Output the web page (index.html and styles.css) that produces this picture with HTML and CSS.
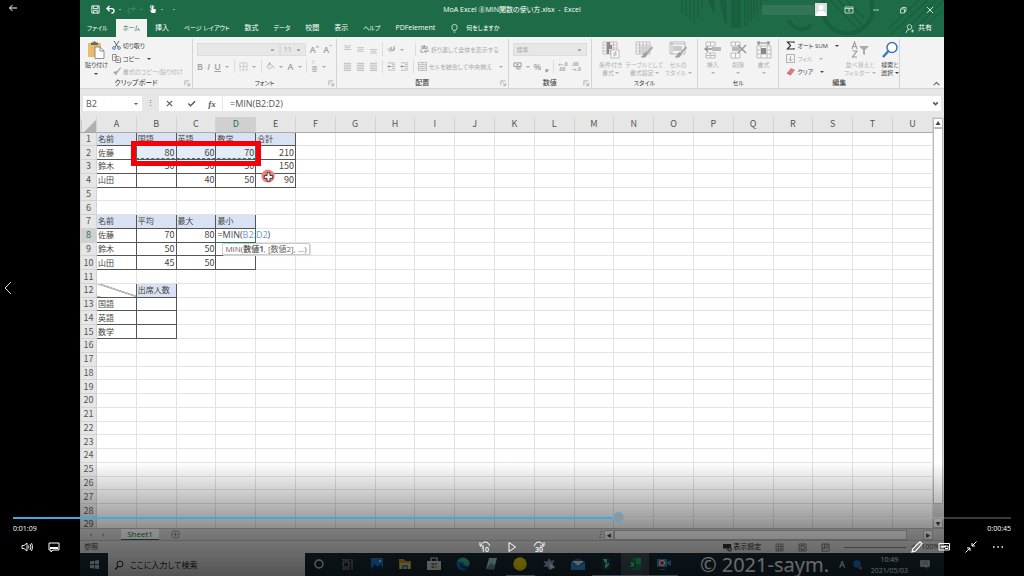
FILE: index.html
```html
<!DOCTYPE html>
<html lang="ja">
<head>
<meta charset="utf-8">
<title>MoA Excel ⑧MIN関数の使い方.xlsx - Excel</title>
<link rel="stylesheet" href="styles.css">
</head>
<body>
<svg class="defs" aria-hidden="true">
  <symbol id="launch" viewBox="0 0 8 8"><path d="M1 6V1h5M3 3l3 3M6.500 3.500v3h-3" fill="none" stroke="currentColor" stroke-width=".8"/></symbol>
  <symbol id="lines" viewBox="0 0 10 10"><path d="M1 1.500h8M1 3.500h8M1 5.500h8M1 7.500h8M1 9.500h8" stroke="currentColor" stroke-width=".8"/></symbol>
  <symbol id="indent" viewBox="0 0 10 10"><path d="M1 1h8M5.500 3h3.500M5.500 5h3.500M5.500 7h3.500M1 9h8" stroke="currentColor" stroke-width=".8"/><path d="M1 5h4M2.500 3.500L1 5l1.500 1.500" fill="none" stroke="#7894ae"/></symbol>
  <symbol id="table" viewBox="0 0 18 18"><path d="M1 1h14v12H1zM1 4h14M1 7h14M1 10h14M4.500 1v12M8 1v12M11.500 1v12" fill="#f8f6f8" stroke="#bbb5ba" stroke-width=".8"/></symbol>
  <symbol id="brush" viewBox="0 0 18 18"><path d="M17 5l-6 6.500 1.500 1.500L18 7z" fill="#aaa6aa"/><path d="M11 11c-3 0-2 4-5.500 5 3 1.500 6.500.5 7-3z" fill="#9ca2aa"/></symbol>
</svg>

<main class="player">
  <section class="video" aria-label="Excel">
    <header class="titlebar">
      <svg class="art" viewBox="0 0 270 37" preserveAspectRatio="xMaxYMin slice" aria-hidden="true">
        <g stroke="#1a5f3f" stroke-width="1.500" fill="none"><path d="M8 0v13M12 0v16M16 0v20M20 0v24M24 0v18M28 0v8M71 0v26M74 0v24M77 0v21M80 0v18M83 0v14M87 0v9"/><path d="M35 0h5v13zM46 0h6v24zM58 0h8v27h-8z" fill="#1a5f3f"/></g>
        <g fill="none" stroke="#1a5f3f" stroke-width="4"><path d="M115 20a13 13 0 0 0 22 5"/><path d="M150 0a25 25 0 1 0 47 0"/></g>
        <path d="M156 0l30 31M164 0l24 25M172 0l18 18M245 0l-30 28M254 0l-38 35M262 0l-34 33M270 0l-28 28M269 10l-22 20" stroke="#1a5f3f" stroke-width="1.500"/>
      </svg>
      <div class="title-row">
        <div class="quick">
          <button aria-label="上書き保存"><svg viewBox="0 0 10 10"><path d="M1 1h8v8H1zM3 9V6h4v3M2.500 1v3h5V1" fill="none" stroke="#fff"/></svg></button>
          <button aria-label="元に戻す"><svg viewBox="0 0 10 10"><path d="M4 1L1 4l3 3M1 4h5q3 0 3 2.500T6 9" fill="none" stroke="#fff" stroke-width="1.400"/></svg></button>
          <span class="caret"></span>
          <button class="faded" aria-label="やり直し"><svg viewBox="0 0 10 10"><path d="M6 1l3 3-3 3M9 4H4Q1 4 1 6.500T4 9" fill="none" stroke="#78a98d"/></svg></button>
          <span class="caret faded"></span>
          <button aria-label="タッチ"><svg viewBox="0 0 10 10"><path d="M4 1v5L2 5l2 4h4l1-4-3.500-1V1z" fill="#fff"/><circle cx="4.500" cy="2" r="2" fill="none" stroke="#fff" stroke-width=".7"/></svg></button>
          <span class="caret"></span>
          <span class="caret far"></span>
        </div>
        <h1>MoA Excel ⑧MIN関数の使い方.xlsx&nbsp; -&nbsp; Excel</h1>
        <div class="window">
          <span class="account"></span>
          <svg class="avatar" viewBox="0 0 12 13"><path fill="#ddd" d="M0 0h12v13H0z"/><circle cx="6" cy="4.500" r="2.600" fill="#fff"/><path d="M1 13q0-5 5-5t5 5z" fill="#fff"/></svg>
          <button aria-label="リボンの表示オプション"><svg viewBox="0 0 10 10"><path d="M1 2h8v6H1zM1 3.500h8M5 7V4.500M4 5.500l1-1 1 1" fill="none" stroke="#e0eee5" stroke-width=".8"/></svg></button>
          <button aria-label="最小化"><svg viewBox="0 0 10 10"><path d="M2 5h6" stroke="#e0eee5" stroke-width=".8"/></svg></button>
          <button aria-label="元に戻す(縮小)"><svg viewBox="0 0 10 10"><path d="M2.500 4h4v4h-4zM4 4V2.500h4v4H6.500" fill="none" stroke="#e0eee5" stroke-width=".8"/></svg></button>
          <button aria-label="閉じる"><svg viewBox="0 0 10 10"><path d="M2 2l6 6M8 2L2 8" stroke="#e0eee5" stroke-width=".9"/></svg></button>
        </div>
      </div>
      <nav class="tabs">
        <button class="kana">ファイル</button><button class="kana active">ホーム</button><button>挿入</button><button class="kana">ページ レイアウト</button><button>数式</button><button class="kana">データ</button><button>校閲</button><button>表示</button><button class="kana">ヘルプ</button><button>PDFelement</button>
        <button class="kana tell"><svg viewBox="0 0 8 10"><path d="M2.500 7Q1 5 1 3.500a3 3 0 0 1 6 0Q7 5 5.500 7zM3 9h2" fill="none" stroke="#fff" stroke-width=".8"/></svg>何をしますか</button>
        <button class="share"><svg viewBox="0 0 9 9"><circle cx="4.500" cy="3" r="2.300" fill="none" stroke="#dcece2" stroke-width=".8"/><path d="M1 9q0-3.500 3.500-3.500M6 7h3M7.500 5.500v3" fill="none" stroke="#dcece2" stroke-width=".8"/></svg>共有</button>
      </nav>
    </header>

    <div class="ribbon">
      <section class="group g-clip">
        <div class="body">
          <button class="big"><svg viewBox="0 0 18 18"><path d="M1 2h13v14H1z" fill="#eabb6b"/><path d="M4 3V1.500h2Q7.500-1 9 1.500h2V4H4z" fill="#686868"/><path d="M8 6h5l4 4v7.500H8z" fill="#fff" stroke="#777" stroke-width=".8"/><path d="M13 6v4h4" fill="none" stroke="#777" stroke-width=".8"/></svg><span>貼り付け</span><i class="caret"></i></button>
          <div class="stack">
            <button><svg viewBox="0 0 9 9"><path d="M2 0l4 6M7 0L3 6" stroke="#555" stroke-width=".9"/><circle cx="2" cy="7" r="1.400" fill="none" stroke="#4a7fc0"/><circle cx="7" cy="7" r="1.400" fill="none" stroke="#4a7fc0"/></svg>切り取り</button>
            <button><svg viewBox="0 0 9 9"><path d="M.5.5h3.500v6H.5zM4 2.500h3l1.500 1.500v4.500H4zM5 5h2.500M5 6.500h2.500M1.500 3H3" fill="#fff" stroke="#666" stroke-width=".7"/></svg>コピー<i class="caret"></i></button>
            <button class="dim"><svg viewBox="0 0 9 9"><path d="M8.500 0L5 4l1 1 3-4zM5 4L1 5l3 3.500L6 5z" fill="#aaa"/></svg>書式のコピー/貼り付け</button>
          </div>
        </div>
        <footer>クリップボード<svg><use href="#launch"/></svg></footer>
      </section>
      <section class="group g-font">
        <div class="body rows">
          <div class="row"><select class="family" aria-label="フォント" disabled><option></option></select><select class="size" aria-label="サイズ" disabled><option>11</option></select><b class="glyph">A<sup>^</sup></b><b class="glyph">A<sup>ˇ</sup></b></div>
          <div class="row spread"><b class="glyph">B</b><b class="glyph"><i>I</i></b><b class="glyph"><u>U</u></b><i class="caret"></i><hr><svg viewBox="0 0 10 10"><path d="M1 1h8v8H1zM5 1v8M1 5h8" fill="none" stroke="#bbb" stroke-dasharray="1 .5"/></svg><i class="caret"></i><hr><svg viewBox="0 0 10 10"><path d="M4 1L1 5l3 3 3.500-3.500zM4 0v4M8 5l1 2" fill="#eee" stroke="#aaa" stroke-width=".9"/></svg><i class="caret"></i><b class="glyph">A</b><i class="caret"></i><hr><span class="ruby"><small>ア</small><span>亜</span></span><i class="caret"></i></div>
        </div>
        <footer class="kana">フォント<svg><use href="#launch"/></svg></footer>
      </section>
      <section class="group g-align">
        <div class="body rows">
          <div class="row"><svg viewBox="0 0 10 10"><path d="M1 1h8M2 3h6M1 5h8" stroke="#aaa" stroke-width=".7"/></svg><svg viewBox="0 0 10 10"><path d="M1 3h8M2 5h6M1 7h8" stroke="#aaa" stroke-width=".7"/></svg><svg viewBox="0 0 10 10"><path d="M1 5h8M2 7h6M1 9h8" stroke="#aaa" stroke-width=".7"/></svg><hr><svg viewBox="0 0 10 10"><path d="M1 4l3 4M3 3l3 4M5 2l-1 3 3 1 1-3M8 1v5" fill="none" stroke="#999"/></svg><i class="caret"></i><span class="gap"></span><hr><span class="wide"><svg viewBox="0 0 10 10"><path d="M2 1v3h2V1zM5 0v4h3V2H5M1 5v3h3M9 5v2H5M6.500 5.500L5 7l1.500 2" fill="none" stroke="#999"/></svg>折り返して全体を表示する</span></div>
          <div class="row"><svg><use href="#lines"/></svg><svg><use href="#lines"/></svg><svg><use href="#lines"/></svg><hr><svg><use href="#indent"/></svg><svg><use href="#indent"/></svg><hr><span class="wide"><svg viewBox="0 0 10 10"><path d="M.5.5h9v9h-9zM.5 3h9M.5 7h9M5 .5V3M5 7v2.500M2 5h6" fill="none" stroke="#aaa" stroke-width=".8"/></svg>セルを結合して中央揃え<i class="caret"></i></span></div>
        </div>
        <footer>配置<svg><use href="#launch"/></svg></footer>
      </section>
      <section class="group g-num">
        <div class="body rows">
          <div class="row"><select class="format" aria-label="数値の書式" disabled><option>標準</option></select></div>
          <div class="row spread"><svg viewBox="0 0 10 10"><path d="M1 1h8v4H1z" fill="none" stroke="#8a94a4"/><ellipse cx="6" cy="7" rx="3" ry="2" fill="#ccc0bb"/><circle cx="5" cy="3" r="1" fill="#888"/></svg><i class="caret"></i><b class="glyph">%</b><b class="glyph">❟</b><hr><span class="dec">←.0<br>.00</span><span class="dec">.00<br>→.0</span></div>
        </div>
        <footer>数値<svg><use href="#launch"/></svg></footer>
      </section>
      <section class="group g-style">
        <div class="body bigs dim">
          <button class="big"><svg viewBox="0 0 18 18"><use href="#table"/><path d="M5 1h3v3h2v4H7v5H5z" fill="#8f8b90"/><path d="M9 9h8v8H9zM11 12h4M11 14h4M14 10l-2 6" fill="#fff" stroke="#aaa" stroke-width=".8"/></svg><span>条件付き<br>書式 <i class="caret"></i></span></button>
          <button class="big"><svg viewBox="0 0 18 18"><use href="#table"/><path d="M5 5h10v8H5z" fill="#ccc8cf" opacity=".6"/><use href="#brush"/></svg><span>テーブルとして<br>書式設定 <i class="caret"></i></span></button>
          <button class="big"><svg viewBox="0 0 18 18"><path d="M1 1h15v12H1zM1 3h15M3 1v12" fill="#f8f6f8" stroke="#bbb"/><path d="M4 5h9v5H4z" fill="#ccc8cf"/><use href="#brush"/></svg><span>セルの<br>スタイル <i class="caret"></i></span></button>
        </div>
        <footer class="kana">スタイル</footer>
      </section>
      <section class="group g-cell">
        <div class="body bigs dim">
          <button class="big"><svg viewBox="0 0 18 18"><path d="M2 1h9v4H2zM2 12h9v5H2zM6.500 1v4M6.500 12v5M2 14.500h9" fill="#f8f8f8" stroke="#bbb"/><path d="M8 6h9v4H8z" fill="#bbb8c0"/><path d="M8 8H1M4 5.500L1 8l3 2.500" fill="none" stroke="#8c939f" stroke-width="1.300"/></svg><span>挿入<br><i class="caret"></i></span></button>
          <button class="big"><svg viewBox="0 0 18 18"><path d="M2 1h9v4H2zM2 12h9v5H2zM6.500 1v4M6.500 12v5" fill="#f8f8f8" stroke="#bbb"/><path d="M3 6h8v4H3z" fill="#bbb8c0"/><path d="M9 4l8 8M17 4l-8 8" stroke="#999" stroke-width="1.500"/></svg><span>削除<br><i class="caret"></i></span></button>
          <button class="big"><svg viewBox="0 0 18 18"><path d="M2 5h14v12H2zM2 9h14M2 13h14M6 5v12M12 5v12" fill="#f8f8f8" stroke="#bbb"/><path d="M6 7h5v6H6z" fill="#88858c"/><path d="M3 0v4M14 0v4M3 2h11M5 .5L3 2l2 1.500M12 .5L14 2l-2 1.500" fill="none" stroke="#888"/></svg><span>書式<br><i class="caret"></i></span></button>
        </div>
        <footer class="kana">セル</footer>
      </section>
      <section class="group g-edit">
        <div class="body">
          <div class="stack">
            <button><svg viewBox="0 0 9 9"><path d="M8 2V1H1.500l3 3.500-3 3.500H8V7" fill="none" stroke="#333" stroke-width="1.200"/></svg>オート SUM<i class="caret"></i></button>
            <button class="dim"><svg viewBox="0 0 9 9"><path d="M.5.5h8v8h-8zM4.500 2v5M2.500 5l2 2 2-2" fill="none" stroke="#aaa" stroke-width=".9"/></svg>フィル<i class="caret"></i></button>
            <button><svg viewBox="0 0 9 9"><path d="M5 1l4 2-4 5-4-2z" fill="#e07882"/><path d="M1 6l4 2" stroke="#b7535e"/></svg>クリア<i class="caret"></i></button>
          </div>
          <button class="big dim"><svg viewBox="0 0 18 18"><path d="M1 8l2.500-7L6 8M2 5.500h3M1.500 10H6l-4.500 6H6" fill="none" stroke="#999" stroke-width="1.100"/><path d="M8 5h10l-4 4v5l-2-1V9z" fill="#aaa"/></svg><span>並べ替えと<br>フィルター <i class="caret"></i></span></button>
          <button class="big"><svg viewBox="0 0 18 18"><circle cx="11" cy="6.500" r="5" fill="#fff" stroke="#3b78b5" stroke-width="1.500"/><path d="M7.500 10L2 16" stroke="#3b78b5" stroke-width="2.500"/></svg><span>検索と<br>選択 <i class="caret"></i></span></button>
        </div>
        <footer>編集</footer>
      </section>
      <section class="g-end"><svg viewBox="0 0 8 8"><path d="M1.500 5.500L4 3l2.500 2.500" fill="none" stroke="#555" stroke-width=".9"/></svg></section>
    </div>

    <div class="formula">
      <div class="namebox"><input aria-label="名前ボックス" value="B2"><i class="caret"></i></div>
      <span class="grip">⋮</span>
      <div class="fx"><button aria-label="キャンセル"><svg viewBox="0 0 10 10"><path d="M2 2l6 6M8 2L2 8" stroke="#555" stroke-width="1.200"/></svg></button><button aria-label="入力"><svg viewBox="0 0 10 10"><path d="M1.500 5L4 7.500 9 2.500" fill="none" stroke="#555" stroke-width="1.500"/></svg></button><button aria-label="関数の挿入"><i>fx</i></button></div>
      <div class="entry"><input aria-label="数式バー" value="=MIN(B2:D2)"><svg viewBox="0 0 8 8"><path d="M2 3l2 2 2-2" fill="none" stroke="#555" stroke-width="1.300"/></svg></div>
    </div>

    <div class="work">
      <div class="sheet">
        <table id="grid"></table>
        <div class="marquee"></div>
        <div class="redbox"></div>
        <svg class="pointer" viewBox="0 0 16 16"><circle cx="7.500" cy="7.500" r="7" fill="#ee7f78"/><path d="M6.500 4h3v3h3v3h-3v3h-3v-3h-3V7h3z" fill="#fff" stroke="#222" stroke-width=".9"/></svg>
      </div>
      <div class="vscroll"><span>▲</span><i></i><span>▼</span></div>
    </div>

    <div class="sheetbar">
      <span class="nav">‹</span><span class="nav">›</span><button class="tab">Sheet1</button>
      <svg class="add" viewBox="0 0 10 10"><circle cx="5" cy="5" r="4.300" fill="none" stroke="#777" stroke-width=".8"/><path d="M5 2.500v5M2.500 5h5" stroke="#777" stroke-width=".8"/></svg>
      <div class="hscroll"><em>⋮</em><span>◀</span><i></i><span class="end">▶</span></div>
    </div>
    <div class="status"><span>参照</span>
      <div class="views"><span class="disp"><svg viewBox="0 0 10 10"><path d="M0 1h9v5H0zM3 8h4V6" fill="#333"/><circle cx="7.500" cy="7" r="2" fill="#aaa" stroke="#333"/></svg>表示設定</span>
      <svg viewBox="0 0 9 9"><path d="M1 1h7v7H1zM1 3.500h7M1 6h7M3.500 1v7M6 1v7" fill="none" stroke="#777" stroke-width=".8"/></svg>
      <svg viewBox="0 0 9 9"><path d="M1 1h7v7H1zM3 2.500h3v4H3z" fill="none" stroke="#777"/></svg>
      <svg viewBox="0 0 9 9"><path d="M1 1h7v7H1zM3.500 1v4H6V1M1 5h3" fill="none" stroke="#777"/></svg>
      <span class="zoom"></span><span>＋</span><span>100%</span></div>
    </div>
    <div class="taskbar">
      <button class="start" aria-label="スタート"><svg viewBox="0 0 10 10"><path d="M0 1.500l4.500-.7v4H0zM5.200.7L10 0v4.800H5.200zM0 5.500h4.500v4L0 8.800zM5.200 5.500H10V10l-4.800-.6z" fill="#b8c4cc"/></svg></button>
      <label class="search"><svg viewBox="0 0 10 10"><circle cx="6" cy="4" r="3" fill="none" stroke="#222"/><path d="M4 6.500L1 9.500" stroke="#222" stroke-width="1.200"/></svg><input aria-label="検索" placeholder="ここに入力して検索"></label>
      <div class="apps">
        <span><svg viewBox="0 0 14 14"><circle cx="7" cy="7" r="4" fill="none" stroke="#ddd" stroke-width="1.500"/></svg></span>
        <span><svg viewBox="0 0 14 14"><path d="M2 5h6v5H2zM2 2v1h6V2M2 13v-1h6v1M11 2v4M11 8v5M10 6.500h2" fill="none" stroke="#99a"/></svg></span>
        <span><svg viewBox="0 0 14 14"><path d="M1 1h12v12H1z" fill="#1d7fd4"/><path d="M1 12l4-5 3 3 2-3 3 4v2H1z" fill="#083057"/><circle cx="10" cy="4" r="1" fill="#fff"/></svg></span>
        <span><svg viewBox="0 0 14 14"><path d="M1 2h5l1 2h6v8H1z" fill="#d99a25"/><path d="M2 6h10v6H2z" fill="#f5cf67"/><path d="M4 8h6v4H8v-2H6v2H4z" fill="#3a8bc9"/></svg></span>
        <span><svg viewBox="0 0 14 14"><path d="M0 4h14v9H0z" fill="#ddd"/><path d="M4 4V1h6v3" fill="none" stroke="#ddd" stroke-width="1.200"/><path d="M4.500 6H7v2H4.500z" fill="#e44"/><path d="M7.500 6H10v2H7.500z" fill="#4a4"/><path d="M4.500 9H7v2H4.500z" fill="#28c"/><path d="M7.500 9H10v2H7.500z" fill="#da3"/></svg></span>
        <span><svg viewBox="0 0 14 14"><circle cx="7" cy="7" r="6.500" fill="#1573bd"/><path d="M1 5q3-5 8-4 5 2 4.500 6.500-3 2-5.500 0Q8 3 1 5z" fill="#3fbf9a"/><path d="M5 7q0 4 7 4" fill="none" stroke="#06324f" stroke-width="2"/></svg></span>
        <span><svg viewBox="0 0 14 14"><path d="M5 1h8l-3 11H2z" fill="#a8d8dc"/><path d="M2 12l5-6 4 3-1 4z" fill="#5d8d9c"/></svg></span>
        <span class="on"><svg viewBox="0 0 14 14"><circle cx="7" cy="7" r="6.700" fill="#eedc00"/></svg></span>
        <span><svg viewBox="0 0 14 14"><path d="M7 1l1.500 3 4-1-2 4 2.500 3-4-.5L7 13l-1.500-3.500-4 .5 2-3-2-3 4 .5z" fill="#99a4d5"/><path d="M8 6l5 5-3 .5L8 13z" fill="#eee"/></svg></span>
        <span><svg viewBox="0 0 14 14"><path d="M0 5l7-4 7 4v8H0z" fill="#1767a5"/><path d="M1 4h12L7 9z" fill="#eee"/><path d="M0 5l7 5 7-5v8H0z" fill="#2d9ce0"/></svg></span>
        <span class="on"><svg viewBox="0 0 14 14"><path d="M2 1h10v12H2z" fill="#153d3a"/><path d="M4 2h4v4H6zM6 7l4-1v2l-4 4z" fill="#6de0c0"/></svg></span>
        <span class="on current"><svg viewBox="0 0 14 14"><path d="M4 1h9v12H4z" fill="#1a8a50"/><path d="M8 1h5v6H8z" fill="#35b475"/><path d="M1 4h7v7H1z" fill="#107040"/><path d="M3 5.500l3 4M6 5.500l-3 4" stroke="#fff"/></svg></span>
        <span class="on"><svg viewBox="0 0 14 14"><path d="M0 2h10v8H0zM10 5l4-2v6l-4-2zM3 12h5v1H3z" fill="#3a93bb"/><circle cx="5" cy="6" r="3" fill="#fff"/><circle cx="5" cy="6" r="2" fill="#e03030"/></svg></span>
      </div>
      <div class="tray"><span class="ime">A</span><svg viewBox="0 0 10 10"><circle cx="4" cy="4" r="3.800" fill="#1673cc"/><circle cx="7.500" cy="8" r="1.500" fill="#e35c3c"/></svg><time>10:49<br>2021/05/03</time><svg viewBox="0 0 10 10"><path d="M0 0h10v7H7v2L5 7H0zM2 2h6M2 4h6" fill="#ccc" stroke="#555" stroke-width=".6"/></svg></div>
      <strong class="mark">© 2021-saym.</strong>
    </div>
  </section>

  <button class="back" aria-label="戻る"><svg viewBox="0 0 10 10"><path d="M1.500 5H9M4.500 2l-3 3 3 3" fill="none" stroke="#fff"/></svg></button>
  <button class="prev" aria-label="前へ"><svg viewBox="0 0 10 14"><path d="M8 1L2 7l6 6" fill="none" stroke="#ddd"/></svg></button>

  <div class="controls">
    <input class="seek" type="range" aria-label="シーク" min="0" max="1000" value="608">
    <div class="times"><span>0:01:09</span><span>0:00:45</span></div>
    <div class="buttons">
      <div><button aria-label="音量"><svg viewBox="0 0 12 12"><path d="M1 4.500h2L6 2v8L3 7.500H1zM7.500 4.500q1 1.500 0 3M9 3q2 3 0 6M10.500 2q2.500 4 0 8" fill="none" stroke="#fff" stroke-width=".9"/></svg></button><button aria-label="字幕"><svg viewBox="0 0 12 12"><path d="M1 2h10v7H5l-2 2V9H1z" fill="none" stroke="#fff"/><path d="M2 6h8v2H2z" fill="#fff"/></svg></button></div>
      <div><button class="skip" aria-label="10秒戻す"><svg viewBox="0 0 12 6"><path d="M1 1v4h4M1.500 4.500Q5-1 9 2l2 3" fill="none" stroke="#fff"/></svg>10</button><button aria-label="再生"><svg viewBox="0 0 12 12"><path d="M3 1.500L9.500 6 3 10.500z" fill="none" stroke="#fff"/></svg></button><button class="skip" aria-label="30秒進む"><svg viewBox="0 0 12 6"><path d="M11 1v4H7M10.500 4.500Q7-1 3 2L1 5" fill="none" stroke="#fff"/></svg>30</button></div>
      <div><button aria-label="編集"><svg viewBox="0 0 12 12"><path d="M1 11l1-3.500L9 .8l2 2L4.500 10z" fill="none" stroke="#fff" stroke-width="1.200"/></svg></button><button aria-label="小さく表示"><svg viewBox="0 0 12 12"><path d="M1 2.500h10.500v6.500H1zM6 5h4v2.500H7" fill="none" stroke="#fff"/><path d="M3 5h5v1.500H3z" fill="#fff"/></svg></button><button aria-label="全画面表示の終了"><svg viewBox="0 0 12 12"><path d="M11.500.5L7 5M7 2v3h3M.5 11.500L5 7M2 7h3v3" fill="none" stroke="#fff"/></svg></button><button aria-label="その他"><svg viewBox="0 0 12 12"><path d="M1 6h1.500M5.300 6h1.500M9.500 6H11" stroke="#fff" stroke-width="1.300"/></svg></button></div>
    </div>
  </div>
</main>
<script src="script.js"></script>
</body>
</html>
```

FILE: styles.css
```css
* { box-sizing: border-box; }
body { margin: 0; background: #000; font-family: "Open Sans", "Noto Sans CJK JP", sans-serif; font-size: 7px; line-height: 8px; color: #444; }
button, input, select { font: inherit; color: inherit; border: 0; background: none; padding: 0; margin: 0; min-width: 0; }
button { display: flex; align-items: center; justify-content: center; white-space: nowrap; }
svg { flex: none; width: 9px; height: 9px; }
hr { width: 1px; height: 13px; margin: 0; border: 0; background: #dcdcdc; }
.defs { position: absolute; width: 0; height: 0; }
.player { position: relative; min-height: 100vh; display: flex; overflow: hidden; }
.video { flex: 1; min-width: 0; height: 100vh; margin: 0 80px; display: flex; flex-direction: column; background: #e6e6e6; font-feature-settings: "palt"; }
.caret { flex: none; display: inline-block; border: 1px solid transparent; border-width: 2px 2px 0; border-top-color: currentColor; }

.titlebar { position: relative; background: #1d6c47; color: #fff; height: 37px; display: flex; flex-direction: column; flex: none; }
.art { position: absolute; right: 0; top: 0; width: 270px; height: 37px; }
.title-row { position: relative; display: grid; grid-template-columns: 1fr auto 1fr; align-items: center; height: 19px; }
.title-row h1 { margin: 0; font-size: 7px; font-weight: 400; }
.quick { display: flex; align-items: center; gap: 6px; padding-left: 11px; }
.quick .caret { margin-left: -2px; border-width: 1px 1px 0; }
.quick .far { margin-left: 4px; }
.faded { opacity: .5; }
.window { display: flex; justify-content: flex-end; align-items: center; gap: 17px; padding-right: 9px; }
.window button svg { width: 10px; height: 10px; }
.account { width: 52px; height: 10px; margin-right: -17px; background: #437b60; opacity: .6; }
.avatar { width: 12px; height: 13px; margin-left: 1px; }
.tabs { position: relative; display: flex; height: 18px; gap: 1px; }
.tabs button { padding: 0 7px; }
.kana, .tabs .kana { font-size: 6px; }
.tabs .active { background: #f3f3f3; color: #1d6c47; }
.tabs .tell { gap: 7px; }
.tabs .share { margin-left: auto; gap: 4px; padding-right: 12px; }

.ribbon { display: flex; height: 52px; flex: none; background: #f3f3f3; border-bottom: 1px solid #d5d5d5; padding-top: 2px; }
.group { display: flex; flex-direction: column; min-width: 0; border-right: 1px solid #d4d4d4; color: #444; }
.g-clip { flex: 113 1 0; }
.g-font { flex: 144 1 0; }
.g-align { flex: 172 1 0; }
.g-num { flex: 83 1 0; }
.g-style { flex: 106 1 0; }
.g-cell { flex: 81 1 0; }
.g-edit { flex: 121 1 0; }
.g-end { flex: 44 1 0; display: flex; align-items: flex-end; justify-content: flex-end; }
.g-end svg { margin: 0 3px 0 0; }
.group footer { position: relative; text-align: center; color: #333; height: 9px; }
.group footer svg { position: absolute; right: 1px; top: 1px; width: 7px; height: 7px; color: #999; }
.body { flex: 1; min-height: 0; display: flex; padding-left: 5px; white-space: nowrap; font-size: 6px; }
.big { flex-direction: column; justify-content: flex-start; padding-top: 2px; gap: 2px; text-align: center; }
.big svg { width: 18px; height: 18px; }
.big > .caret { margin-top: 2px; }
.big .caret { vertical-align: middle; }
.stack { display: flex; flex-direction: column; padding: 0 0 0 4px; }
.stack button { height: 13px; gap: 2px; justify-content: flex-start; }
.stack .caret { margin-left: 5px; }
.dim, .dim span { color: #b2b2b2; }
.bigs { display: grid; grid-template-columns: repeat(3, minmax(0, 1fr)); padding: 0 2px; }
.rows { flex-direction: column; color: #a8a8a8; padding: 2px 4px; }
.row { display: flex; align-items: center; height: 17px; gap: 4px; }
.spread { justify-content: space-between; padding-right: 6px; }
.row select { appearance: none; height: 13px; border: 1px solid #ddd; background: #e7e7e7 conic-gradient(from 135deg at 50% 0, #aaa 0 0) no-repeat right 5px center / 3px 2px; padding-left: 3px; opacity: 1; color: #aaa; }
.row .family { flex: 1; margin-right: -4px; }
.row .size { width: 26px; font-size: 7px; }
.glyph { font-size: 9px; font-weight: 600; color: #a0a0a0; }
.glyph sup { font-size: 6px; line-height: 1px; color: #7894ae; }
.ruby { display: flex; flex-direction: column; line-height: 7px; }
.ruby small { font-size: 4px; line-height: 6px; }
.g-align .body { padding-left: 6px; }
.g-align .gap { width: 3px; }
.wide { display: flex; align-items: center; gap: 2px; }
.wide .caret { margin-left: 5px; }
.g-num .format { flex: 1; }
.dec { font-size: 5px; line-height: 5px; font-weight: 700; }
.g-edit .body { gap: 5px; padding-left: 3px; }

.formula { display: flex; flex: none; height: 28px; padding: 7px 3px 6px; align-items: stretch; color: #555; }
.formula > div { background: #fff; display: flex; align-items: center; }
.namebox { width: 59px; padding: 0 4px 0 3px; }
.namebox input { flex: 1; font-size: 9px; height: 13px; }
.grip { width: 17px; text-align: center; line-height: 14px; }
.fx { width: 63px; justify-content: space-around; margin-right: 1px; }
.fx button { font-family: "Liberation Serif", serif; font-size: 9px; font-weight: 700; }
.entry { flex: 1; padding: 0 1px 0 7px; }
.entry input { flex: 1; font-size: 9px; height: 13px; }

.work { flex: 1; min-height: 0; display: flex; overflow: hidden; }
.sheet { position: relative; flex: 1; overflow: hidden; background: #fff; }
#grid { border-collapse: collapse; table-layout: fixed; width: 100%; height: 415px; font: 8px/12px "Open Sans", "Noto Sans CJK JP", sans-serif; font-feature-settings: normal; color: #444; }
#grid th { font-weight: 400; padding: 0; border: 1px solid #d2d2d2; background: #e6e6e6; color: #555; }
#grid th:first-child { width: 16px; }
#grid thead th { height: 15px; border-top: 0; border-color: #e6e6e6 #d2d2d2 #aaa; }
#grid thead th:first-child { background: linear-gradient(135deg, #e6e6e6 60%, #b0b0b0 60%); }
#grid .picked { background: #d0d0d0; color: #217346; }
#grid td { position: relative; padding: 0 1px; border: 1px solid #e3e3e3; white-space: nowrap; }
#grid .num, #grid th { font-family: "Noto Sans CJK JP", sans-serif; font-size: 9px; }
#grid .num { text-align: right; }
#grid .box { border-color: #555; }
#grid .head { background: #d9e2f2; }
#grid .range { background: #e3ecf7; }
#grid .slash { background: linear-gradient(to top right, transparent 48%, #555 49%, #555 51%, transparent 52%); }
#grid .edit { font-size: 9px; border: 1px solid #2e7753; }
#grid .edit span { color: #6a9ad6; }
.tip { position: absolute; z-index: 1; left: 6px; top: 14px; height: 12px; line-height: 10px; padding: 0 2px; font-size: 8px; background: #fff; border: 1px solid #ccc; border-radius: 1px; box-shadow: 1px 1px 1px #ddd; color: #666; }
.marquee { position: absolute; left: 56px; top: 28px; width: 120px; height: 14px; border: 1px dashed #37786a; }
.redbox { position: absolute; left: 51px; top: 24px; width: 130px; height: 25px; border: 5px solid #f50008; }
.pointer { position: absolute; left: 181px; top: 52px; width: 15px; height: 15px; }
.vscroll { width: 11px; display: flex; flex-direction: column; padding: 1px 1px 0 0; background: #d8d8d8; font-size: 5px; text-align: center; }
.vscroll span { height: 10px; background: #fff; border: 1px solid #bbb; }
.vscroll i { flex: 1; background: #fff; border: 1px solid #bbb; margin-bottom: 14px; }

.sheetbar { display: flex; flex: none; height: 12px; background: #dcdcdc; border-top: 1px solid #bbb; align-items: center; padding-left: 10px; }
.nav { width: 12px; }
.tab { background: #fff; color: #217346; width: 38px; height: 11px; margin: 0 12px 0 7px; font-size: 8px; border-bottom: 1px solid #217346; }
.hscroll { display: flex; width: 348px; height: 10px; margin-left: auto; padding-right: 11px; font-size: 5px; }
.hscroll em { width: 8px; font-size: 8px; }
.hscroll span { width: 10px; border: 1px solid #bbb; background: #fff; text-align: center; }
.hscroll i { flex: 1; background: #fff; border: 1px solid #bbb; margin-right: 16px; }
.status { display: flex; flex: none; height: 13px; align-items: center; justify-content: space-between; padding: 0 5px 0 4px; background: #e3e3e3; border-top: 1px solid #bbb; }
.views { display: flex; align-items: center; gap: 14px; }
.views span:nth-last-child(-n+2) { margin-left: -10px; }
.disp { display: flex; align-items: center; gap: 1px; color: #222; }
.zoom { width: 62px; border-top: 1px solid #888; }
.taskbar { position: relative; display: flex; flex: none; height: 23px; background: #172934; color: #fff; }
.start { width: 28px; }
.search { width: 197px; background: #e8e8e8; color: #222; display: flex; align-items: center; gap: 6px; padding-left: 6px; }
.search input { flex: 1; font-size: 8px; height: 14px; }
.search input::placeholder { color: #222; opacity: 1; }
.search svg { width: 10px; height: 10px; }
.apps { display: grid; grid-template-columns: repeat(13, 1fr); width: 373px; }
.apps span { display: flex; align-items: center; justify-content: center; border-bottom: 1px solid transparent; }
.apps svg { width: 14px; height: 14px; }
.apps .on { border-color: #9fc6e6; }
.apps .current { background: #40505a; }
.tray { margin-left: auto; display: flex; align-items: center; gap: 8px; padding-right: 14px; text-align: center; }
.tray time { line-height: 11px; margin-right: 4px; }
.tray svg { width: 10px; height: 10px; }
.ime { font-size: 9px; }
.mark { position: absolute; right: 115px; top: 0; font: 400 20px/23px "Noto Sans", sans-serif; color: #fff; }

.back, .prev { position: absolute; left: 3px; width: 10px; }
.back { left: 8px; top: 3px; }
.back svg { width: 10px; height: 10px; }
.prev { top: 50%; transform: translateY(-50%); }
.prev svg { width: 10px; height: 14px; }
.controls { position: absolute; inset: auto 0 0; height: 126px; display: flex; flex-direction: column; justify-content: flex-end; padding: 0 13px 22px; color: #fff; background: linear-gradient(transparent 10%, rgba(0, 0, 0, .42) 60%, rgba(0, 0, 0, .64)); }
.seek { appearance: none; height: 11px; width: 100%; background: linear-gradient(90deg, #41a8e0 60.7%, rgba(190, 190, 190, .3) 60.7%) no-repeat center / 100% 2px; }
.seek::-webkit-slider-thumb { appearance: none; width: 11px; height: 11px; border: 1px solid #4bb4ee; border-radius: 50%; background: #949494; }
.times { display: flex; justify-content: space-between; line-height: 11px; }
.buttons { display: grid; grid-template-columns: 1fr auto 1fr; margin-top: 6px; }
.buttons div { display: flex; }
.buttons div:last-child { justify-content: flex-end; }
.buttons button { width: 27px; height: 14px; }
.buttons svg { width: 12px; height: 12px; }
.buttons .skip { flex-direction: column; line-height: 6px; font-weight: 600; }
.buttons .skip svg { height: 6px; }
```

FILE: script.js
```js
const cells = {
  A1: '名前', B1: '国語', C1: '英語', D1: '数学', E1: '合計',
  A2: '佐藤', B2: 80, C2: 60, D2: 70, E2: 210,
  A3: '鈴木', B3: 50, C3: 50, D3: 50, E3: 150,
  A4: '山田', C4: 40, D4: 50, E4: 90,
  A7: '名前', B7: '平均', C7: '最大', D7: '最小',
  A8: '佐藤', B8: 70, C8: 80,
  A9: '鈴木', B9: 50, C9: 50,
  A10: '山田', B10: 45, C10: 50,
  B12: '出席人数', A13: '国語', A14: '英語', A15: '数学',
  D8: '=MIN(<span>B2:D2</span>)<div class="tip">MIN(<b>数値1</b>, [数値2], ...)</div>'
};
const boxes = [['A', 'E', 1, 4], ['A', 'D', 7, 10], ['A', 'B', 12, 15]];
const letters = 'ABCDEFGHIJKLMNOPQRSTU'.split('');

function classes(col, row) {
  const id = col + row;
  const list = [];
  if (typeof cells[id] === 'number') list.push('num');
  for (const [a, b, top, end] of boxes) {
    if (col >= a && col <= b && row >= top && row <= end) {
      list.push('box');
      if (row === top && id !== 'A12') list.push('head');
    }
  }
  if (row === 2 && col >= 'B' && col <= 'D') list.push('range');
  if (id === 'A12') list.push('slash');
  if (id === 'D8') list.push('edit');
  return list.join(' ');
}

let html = '<thead><tr><th></th>' + letters.map(c =>
  `<th${c === 'D' ? ' class="picked"' : ''}>${c}</th>`).join('') + '</tr></thead><tbody>';
for (let r = 1; r <= 29; r++) {
  html += `<tr><th${r === 8 ? ' class="picked"' : ''}>${r}</th>` + letters.map(c =>
    `<td class="${classes(c, r)}">${cells[c + r] ?? ''}</td>`).join('') + '</tr>';
}
document.getElementById('grid').innerHTML = html + '</tbody>';
```
